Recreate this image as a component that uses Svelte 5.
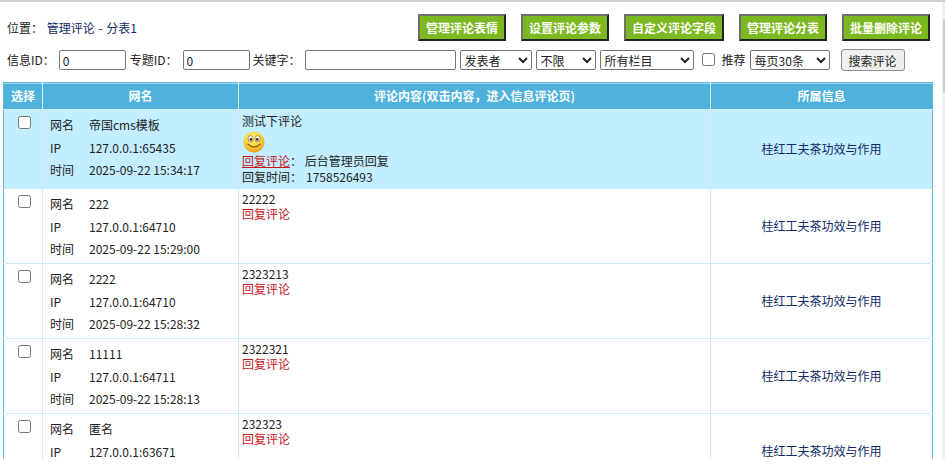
<script>
  const actions = ['管理评论表情', '设置评论参数', '自定义评论字段', '管理评论分表', '批量删除评论'];

  const rows = [
    { name: '帝国cms模板', ip: '127.0.0.1:65435', time: '2025-09-22 15:34:17', body: '测试下评论', replied: true },
    { name: '222', ip: '127.0.0.1:64710', time: '2025-09-22 15:29:00', body: '22222' },
    { name: '2222', ip: '127.0.0.1:64710', time: '2025-09-22 15:28:32', body: '2323213' },
    { name: '11111', ip: '127.0.0.1:64711', time: '2025-09-22 15:28:13', body: '2322321' },
    { name: '匿名', ip: '127.0.0.1:63671', time: '', body: '232323' }
  ];
</script>

<div class="page">
  <div class="topline"></div>

  <div class="main">
    <div class="content">
      <div class="head">
        <div class="crumb">
          <span>位置：</span>
          <a href="#top">管理评论 - 分表1</a>
        </div>
        <div class="actions">
          {#each actions as label}
            <button class="action">{label}</button>
          {/each}
        </div>
      </div>

      <form class="search">
        <label for="info-id">信息ID：</label>
        <input id="info-id" class="short" value="0" />
        <label for="topic-id">专题ID：</label>
        <input id="topic-id" class="short" value="0" />
        <label for="keyword">关键字：</label>
        <input id="keyword" class="keyword" />
        <select class="s-author"><option>发表者</option></select>
        <select class="s-limit"><option>不限</option></select>
        <select class="s-column"><option>所有栏目</option></select>
        <input id="recommend" class="check" type="checkbox" />
        <label for="recommend">推荐</label>
        <select class="s-page"><option>每页30条</option></select>
        <button class="submit" type="button">搜索评论</button>
      </form>

      <table>
        <colgroup>
          <col class="c-check" />
          <col class="c-user" />
          <col class="c-body" />
          <col />
        </colgroup>
        <thead>
          <tr>
            <th>选择</th>
            <th>网名</th>
            <th>评论内容(双击内容，进入信息评论页)</th>
            <th>所属信息</th>
          </tr>
        </thead>
        <tbody>
          {#each rows as row}
            <tr class:active={row.replied}>
              <td class="pick"><input type="checkbox" /></td>
              <td class="user">
                <dl>
                  <dt>网名</dt><dd>{row.name}</dd>
                  <dt>IP</dt><dd>{row.ip}</dd>
                  {#if row.time}
                    <dt>时间</dt><dd>{row.time}</dd>
                  {/if}
                </dl>
              </td>
              <td class="body">
                <div>{row.body}</div>
                {#if row.replied}
                  <svg class="smiley" width="22" height="22" viewBox="0 0 22 22" role="img" aria-label="微笑">
                    <defs>
                      <radialGradient id="face" cx="45%" cy="30%" r="78%">
                        <stop offset="0" stop-color="#fff386" />
                        <stop offset="0.55" stop-color="#fbd02f" />
                        <stop offset="1" stop-color="#dc8f18" />
                      </radialGradient>
                    </defs>
                    <circle cx="11" cy="11" r="10.5" fill="url(#face)" />
                    <ellipse cx="7.6" cy="7.8" rx="2.6" ry="3.1" fill="#fff" stroke="#7a5010" stroke-width="0.6" />
                    <ellipse cx="14.6" cy="7.8" rx="2.6" ry="3.1" fill="#fff" stroke="#7a5010" stroke-width="0.6" />
                    <circle cx="7.9" cy="8.4" r="1.4" fill="#4a2f0c" />
                    <circle cx="14.3" cy="8.4" r="1.4" fill="#4a2f0c" />
                    <path d="M4.6 13q6.4 5.8 12.8 0" fill="none" stroke="#8f5510" stroke-width="1.1" stroke-linecap="round" />
                  </svg>
                  <div class="line"><a class="reply underlined" href="#top">回复评论 </a>： 后台管理员回复</div>
                  <div class="line">回复时间：<span class="stamp">1758526493</span></div>
                {:else}
                  <a class="reply" href="#top">回复评论</a>
                {/if}
              </td>
              <td class="info"><a href="#top">桂红工夫茶功效与作用</a></td>
            </tr>
          {/each}
        </tbody>
      </table>
    </div>
    <div class="scrollbar"><div class="thumb"></div></div>
  </div>
</div>

<style>
  :global(html), :global(body) {
    margin: 0;
    height: 465px;
    overflow: hidden;
    background: #fff;
  }

  .page {
    height: 459px;
    display: flex;
    flex-direction: column;
    font: 12px/18px "Noto Sans CJK SC", "Liberation Sans", sans-serif;
    color: #222;
    overflow: hidden;
  }

  .topline {
    flex: none;
    height: 2px;
    background: #cfcfcf;
  }

  .main {
    flex: 1;
    min-height: 0;
    display: flex;
  }

  .content {
    flex: 1;
    min-width: 0;
    overflow: hidden;
  }

  .scrollbar {
    flex: none;
    width: 3px;
    padding-top: 17px;
    background: #f0f0f0;
  }

  .thumb {
    height: 74px;
    margin-left: 1px;
    background: #c9c9c9;
  }

  a {
    color: #0d2a66;
    text-decoration: none;
  }

  .head {
    display: flex;
    justify-content: space-between;
    align-items: center;
    height: 27px;
    margin-top: 12px;
    padding: 0 12px 0 7px;
  }

  .crumb {
    word-spacing: 1px;
  }

  .actions {
    display: flex;
    gap: 15px;
  }

  .action {
    height: 27px;
    padding: 0 6px;
    box-sizing: border-box;
    border: 2px solid;
    border-color: #6f6f6f #222 #222 #6f6f6f;
    background: #7cb81f;
    color: #fff;
    font: bold 12px "Noto Sans CJK SC", sans-serif;
  }

  .search {
    display: flex;
    align-items: center;
    height: 22px;
    margin-top: 8px;
    padding-left: 7px;
  }

  input, select, .submit {
    box-sizing: border-box;
    font: 12px "Noto Sans CJK SC", sans-serif;
    color: #222;
    margin: 0;
  }

  input:not(.check), select {
    height: 20px;
    border: 1px solid #767676;
    border-radius: 2px;
    background: #fff;
  }

  label {
    white-space: nowrap;
  }

  .short {
    width: 67px;
    padding: 0 3px;
    margin: 0 4px;
  }

  .short + label + .short {
    margin: 0 3px 0 5px;
  }

  .keyword {
    width: 151px;
    margin: 0 4px;
    padding: 0 3px;
  }

  .s-author { width: 72px; }
  .s-limit { width: 60px; margin-left: 4px; }
  .s-column { width: 94px; margin-left: 4px; }
  .check { width: 13px; height: 13px; margin: 0 7px 2px 8px; }
  .s-page { width: 80px; margin-left: 4px; }

  .submit {
    width: 64px;
    height: 22px;
    margin-left: 11px;
    padding: 0;
    border: 1px solid #8f8f8f;
    border-radius: 3px;
    background: #efefef;
  }

  table {
    width: 930px;
    margin: 11px 0 0 3px;
    border: 1px solid #5fbdd8;
    border-collapse: collapse;
    table-layout: fixed;
  }

  .c-check { width: 39px; }
  .c-user { width: 196px; }
  .c-body { width: 472px; }

  th {
    height: 26px;
    padding: 0;
    background: #4eb2dc;
    border-left: 1px solid #d8f0f8;
    box-shadow: inset 0 1px 0 #9ed7ea;
    color: #fff;
    font-size: 12px;
    font-weight: bold;
  }

  th:first-child { border-left: 0; }

  td {
    padding: 0;
    border: 1px solid #cdecf6;
    vertical-align: top;
  }

  td:first-child { border-left: 0; }
  td:last-child { border-right: 0; }

  tbody tr {
    height: 75px;
  }

  tr.active {
    height: 79px;
  }

  tr.active td {
    background: #c2eeff;
    border-bottom-color: #c2eeff;
  }

  .pick {
    text-align: center;
  }

  .pick input {
    width: 13px;
    height: 13px;
    margin: 6px 0 0 2px;
  }

  .user {
    padding: 4px 0 0 7px;
  }

  dl {
    display: grid;
    grid-template-columns: 39px 1fr;
    grid-auto-rows: 22.5px;
    align-items: center;
    margin: 0;
  }

  dd {
    margin: 0;
  }

  .body {
    padding: 2px 3px 0;
    line-height: 15px;
  }

  tr.active .body {
    padding-top: 3px;
  }

  .smiley {
    display: block;
    margin: 3px 0 0 1px;
  }

  .line {
    line-height: 16px;
    white-space: pre;
  }

  .stamp {
    margin-left: 4px;
  }

  .reply {
    color: #c8161d;
  }

  .underlined {
    text-decoration: underline;
  }

  .info {
    text-align: center;
    vertical-align: middle;
  }
</style>
